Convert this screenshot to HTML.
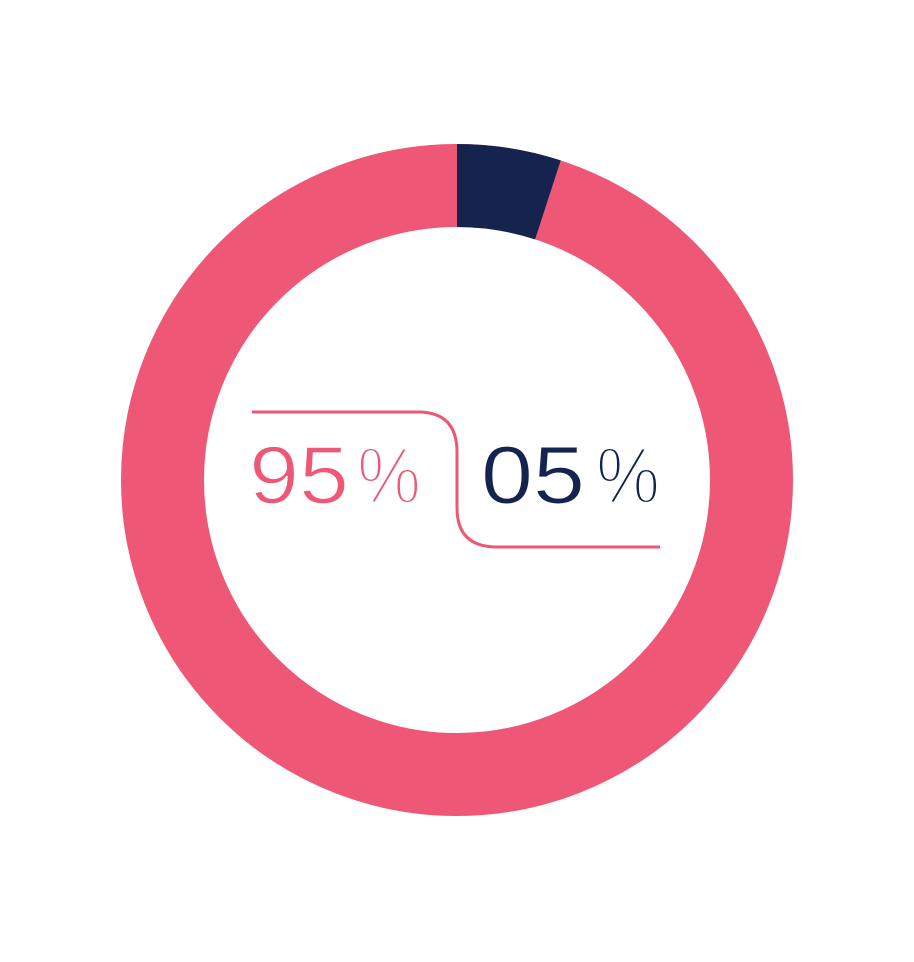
<!DOCTYPE html>
<html><head><style>html,body{margin:0;padding:0;background:#fff;width:914px;height:962px;overflow:hidden}</style></head>
<body>
<svg width="914" height="962" viewBox="0 0 914 962" xmlns="http://www.w3.org/2000/svg">
<circle cx="457" cy="480" r="294.5" fill="none" stroke="#ee5775" stroke-width="83"/>
<path d="M457 185.5 A294.5 294.5 0 0 1 547.9 199.9" fill="none" stroke="#14244f" stroke-width="83"/>
<path d="M252 412 H418 Q457 412 457 452 V508 Q457 547 497 547 H660" fill="none" stroke="#ee5775" stroke-width="3"/>
<text x="249" y="503" font-family="Liberation Sans, sans-serif" font-size="82" fill="#ee5775" stroke="#fff" stroke-width="1.5" textLength="100" lengthAdjust="spacingAndGlyphs">95</text>
<text x="357" y="503" font-family="Liberation Sans, sans-serif" font-size="80" fill="#ee5775" stroke="#fff" stroke-width="3" textLength="64" lengthAdjust="spacingAndGlyphs">%</text>
<text x="481" y="503" font-family="Liberation Sans, sans-serif" font-size="82" fill="#14244f" stroke="#fff" stroke-width="1" textLength="104" lengthAdjust="spacingAndGlyphs">05</text>
<text x="596" y="503" font-family="Liberation Sans, sans-serif" font-size="80" fill="#14244f" stroke="#fff" stroke-width="3" textLength="64" lengthAdjust="spacingAndGlyphs">%</text>
</svg>
</body></html>
